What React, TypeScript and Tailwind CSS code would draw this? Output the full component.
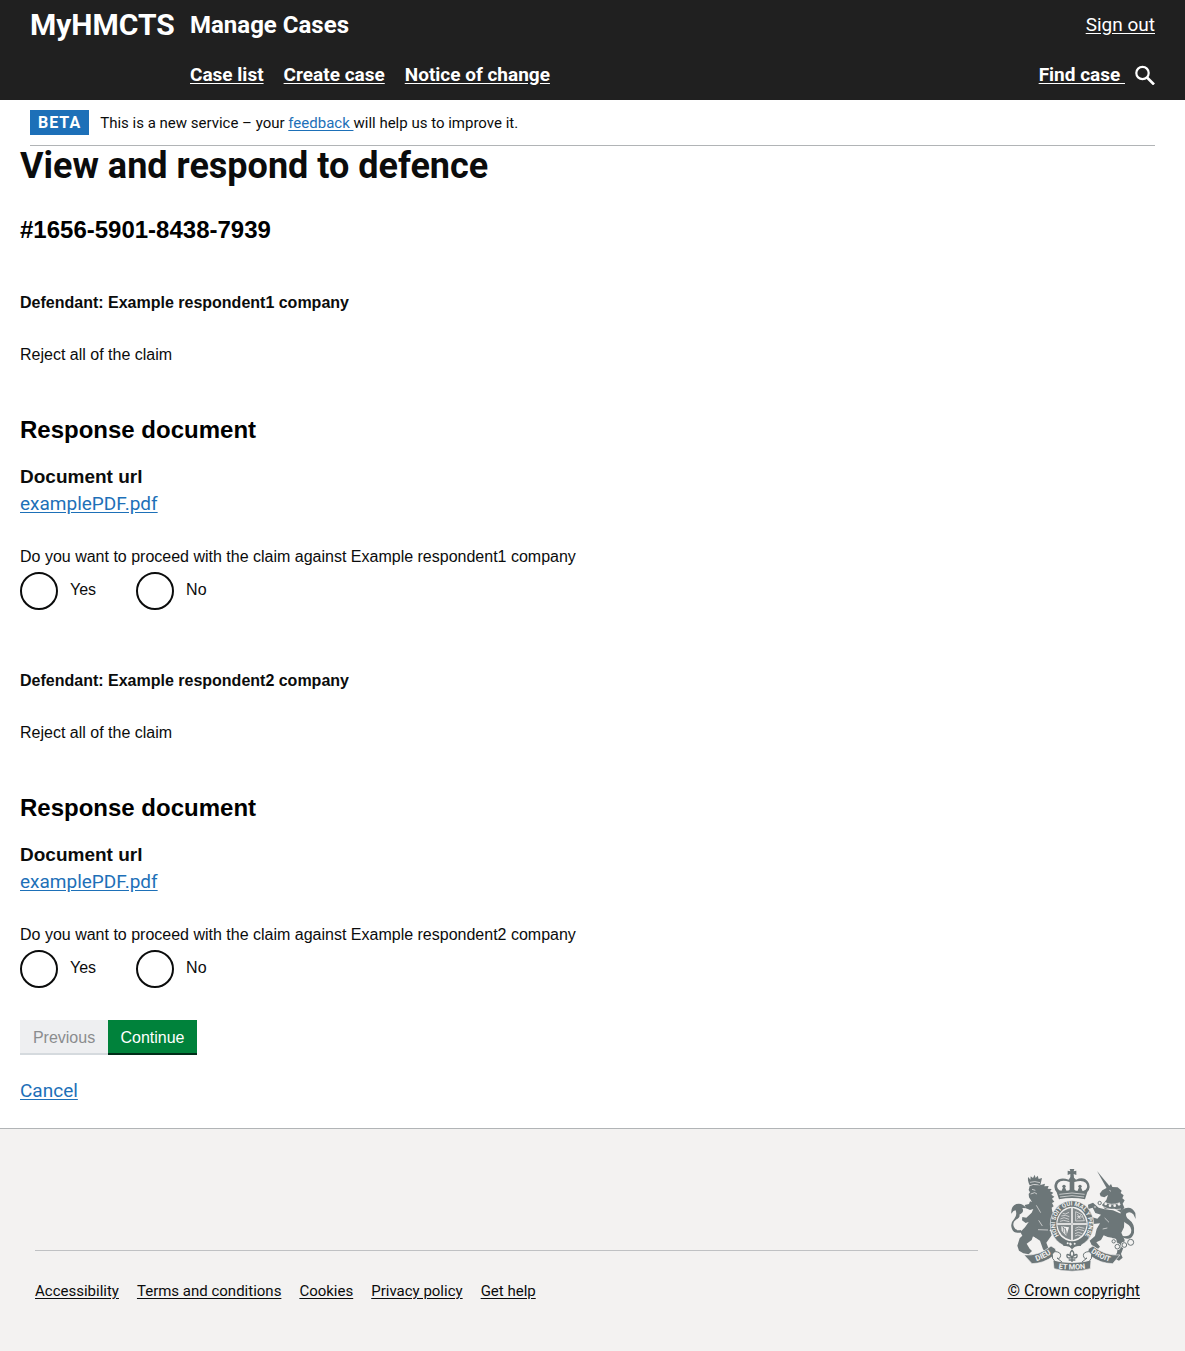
import React from "react";

const linkClass = "text-[#1d70b8] underline underline-offset-2";

function Crest() {
  return (
    <svg viewBox="21 27 375 306" className="h-[102px] w-[125px] overflow-visible" role="img" aria-label="Royal coat of arms">
      <defs>
        <path id="garter-motto" d="M169 231 A50 55 0 1 1 239 231" />
        <path id="ribbon-left" d="M88 306 Q120 298 150 275" />
        <path id="ribbon-mid" d="M155 324 Q204 333 253 324" />
        <path id="ribbon-right" d="M258 275 Q288 298 320 306" />
      </defs>
      <g fill="#6c7678" stroke="none">
        {/* lion */}
        <path d="M73 51 Q69 58 77 76 Q92 70 109 76 L114 54 L104 57 L101 47 L95 54 L92 44 L87 54 L80 49 L79 59 Z" />
        <path d="M77 78 L87 75 L107 76 L123 71 L121 79 L134 78 L131 86 L143 87 L138 94 L148 98 L142 104 L151 110 L144 116 L151 125 L144 129 L149 139 L143 143 L145 155 L154 168 L155 190 L144 192 L142 205 L134 216 L128 231 L117 237 L100 235 L87 229 L83 240 L68 251 L77 266 L84 273 L74 283 L58 280 L45 272 L40 257 L47 235 L55 227 L49 216 L63 202 L74 186 L65 189 L54 181 L55 171 L67 173 L83 158 L88 147 L78 150 L66 145 L62 135 L75 132 L78 124 L84 126 L80 119 L75 112 L74 102 L78 97 L74 90 Z" />
        <path d="M86 227 L109 214 L139 213 L143 226 L127 248 L134 266 L145 267 L151 281 L129 280 L117 268 L108 242 Z" />
        <path d="M22 161 Q20 138 37 132 Q55 127 68 145 L55 144 Q62 158 46 164 Q50 171 35 180 Q24 187 30 201 Q35 214 50 210 L55 216 Q31 224 24 207 Q17 190 31 176 Q40 166 35 151 Q28 151 22 161 Z" />
        {/* unicorn */}
        <path d="M279 33 L317 79 L309 86 Z" />
        <path d="M313 81 L321 72 L325 81 L341 82 L353 92 L350 99 L359 106 L355 115 L362 121 L356 131 L361 143 L350 157 L332 146 L303 148 L294 135 L307 120 L312 105 L301 112 L290 109 L287 101 L295 91 Z" />
        <path d="M302 148 L327 151 L351 161 L361 180 L360 202 L352 218 L362 240 L359 261 L351 282 L356 293 L345 302 L329 294 L339 278 L343 251 L324 233 L311 231 L299 226 L291 240 L277 247 L288 260 L282 266 L263 255 L257 242 L273 228 L278 207 L288 190 L268 192 L259 182 L263 171 L280 176 L291 164 L274 159 L266 143 L253 147 L252 134 L267 128 L284 143 Z" />
        <path d="M349 177 Q346 149 363 145 Q383 138 394 159 L395 177 L388 163 Q376 151 366 161 Q365 171 374 178 Q394 192 390 218 Q384 242 360 234 L347 226 Q374 234 381 218 Q385 199 366 190 Z" />
        {/* crown */}
        <path fillRule="evenodd" d="M197 27 L211 27 L209 34 L217 32 L217 45 L209 42 L210 53 L216 59 Q239 48 252 65 Q263 81 250 96 L243 118 Q204 110 165 118 L158 97 Q146 83 155 65 Q169 49 194 59 L199 51 L199 42 L191 45 L191 32 L199 34 Z M163 68 Q154 80 166 91 Q177 96 197 91 L197 66 Q173 57 163 68 Z M211 66 L211 91 Q233 98 245 89 Q254 79 245 68 Q235 59 211 66 Z" />
        <path d="M171 96 L180 76 L189 96 Z M219 96 L228 76 L237 96 Z M193 96 L204 78 L215 96 Z" />
        <circle cx="180" cy="79" r="5" />
        <circle cx="228" cy="79" r="5" />
        {/* garter */}
        <ellipse cx="204" cy="192" rx="65" ry="70" stroke="#f3f2f1" strokeWidth="2" />
      </g>
      <g fill="none" stroke="#f3f2f1" strokeWidth="2">
        <path d="M166 103 Q204 95 242 103 M168 111 Q204 103 240 111" />
        <path d="M78 67 Q92 62 108 68" />
        <path d="M84 88 L94 91 M80 102 L92 98 L99 102 M97 136 L110 158 M104 181 L115 198 M102 209 L132 210" />
        <path d="M300 125 Q320 139 348 128 M295 139 Q321 153 351 147" />
        <path d="M316 91 L321 94 M302 174 L315 187 M296 207 L310 204" />
      </g>
      <g fill="#f3f2f1">
        <circle cx="305" cy="132" r="4" />
        <circle cx="318" cy="137" r="4" />
        <circle cx="332" cy="137" r="4" />
        <circle cx="345" cy="133" r="4" />
        <ellipse cx="204" cy="192" rx="47" ry="52" />
      </g>
      {/* quartered shield */}
      <g fill="#6c7678" fillOpacity="0.85">
        <path d="M201 144 L201 189 L160 189 Q164 152 201 144 Z" />
        <path d="M207 144 Q243 152 248 189 L207 189 Z" />
        <path fillRule="evenodd" d="M160 195 L201 195 L201 240 Q165 231 160 195 Z M172 199 L195 202 L187 228 L173 213 Z" />
        <path d="M207 195 L248 195 Q243 231 207 240 Z" />
      </g>
      <path d="M204 143 L204 241 M159 192 L249 192" stroke="#6c7678" strokeWidth="2" strokeOpacity="0.5" />
      <path d="M175 200 Q190 208 187 227 M178 201 L178 217 M184 204 L184 223" fill="none" stroke="#6c7678" strokeWidth="2" />
      <g fill="none" stroke="#f3f2f1" strokeWidth="2">
        <path d="M176 160 L184 162 L195 157 M172 168 L184 166 L196 170 M169 177 L180 173 L195 178 M168 184 L179 181 L196 185" />
        <path d="M214 205 L224 201 L241 205 M213 212 L224 208 L240 212 M213 221 L223 217 L235 221 M213 228 L221 225 L230 227" />
        <path d="M215 155 L234 164 L241 182 L215 183 Z M220 162 L229 177 M231 164 L219 178 M219 170 L236 171" />
      </g>
      {/* lower garter */}
      <path d="M170 243 L204 258 L238 243 L230 258 L216 257 L204 268 L193 257 L179 258 Z" fill="#6c7678" />
      <g fill="#f3f2f1">
        <circle cx="191" cy="250" r="3" />
        <circle cx="212" cy="251" r="3" />
        <path d="M198 247 L204 252 L200 257 L195 252 Z" />
      </g>
      {/* ribbons */}
      <g fill="#6c7678" stroke="#f3f2f1" strokeWidth="2">
        <path d="M60 285 Q106 288 141 258 L154 266 Q160 279 147 289 Q120 310 84 311 Z" />
        <path d="M348 285 Q302 288 267 258 L254 266 Q248 279 261 289 Q288 310 326 311 Z" />
        <path d="M147 300 Q204 316 261 300 L259 326 Q204 341 150 326 Z" />
      </g>
      <g fill="#f3f2f1" stroke="#6c7678" strokeWidth="3">
        <path d="M152 302 Q143 298 145 284 Q148 272 161 276 Q174 280 168 293 Q164 298 159 294 L174 306" />
        <path d="M256 302 Q265 298 263 284 Q260 272 247 276 Q234 280 240 293 Q244 298 249 294 L234 306" />
      </g>
      <path d="M204 271 Q193 281 204 292 Q215 281 204 271 Z M204 291 Q187 277 189 289 Q190 297 204 292 Q218 297 219 289 Q221 277 204 291 M204 291 L204 306 M194 300 L214 300" fill="#f3f2f1" stroke="#6c7678" strokeWidth="4" />
      {/* chain */}
      <g fill="none" stroke="#f3f2f1" strokeWidth="8">
        <circle cx="329" cy="244" r="5" />
        <circle cx="340" cy="260" r="6" />
        <circle cx="361" cy="255" r="6" />
      </g>
      <g fill="#f3f2f1" stroke="#6c7678" strokeWidth="3">
        <circle cx="287" cy="129" r="5" />
        <circle cx="273" cy="141" r="4" />
        <circle cx="329" cy="244" r="5" />
        <circle cx="340" cy="260" r="7" />
        <circle cx="361" cy="255" r="7" />
        <circle cx="380" cy="247" r="9" />
      </g>
      <g fill="#f3f2f1" fontFamily="Roboto, sans-serif" fontWeight="700" textAnchor="middle">
        <text fontSize="18">
          <textPath href="#garter-motto" startOffset="50%">HONI SOIT QUI MAL Y PENSE</textPath>
        </text>
        <text fontSize="23">
          <textPath href="#ribbon-left" startOffset="50%">DIEU</textPath>
        </text>
        <text fontSize="22">
          <textPath href="#ribbon-mid" startOffset="50%">ET MON</textPath>
        </text>
        <text fontSize="22">
          <textPath href="#ribbon-right" startOffset="50%">DROIT</textPath>
        </text>
      </g>
    </svg>
  );
}

function Radio({ name, label }: { name: string; label: string }) {
  return (
    <label className="flex gap-3">
      <input
        type="radio"
        name={name}
        className="size-[38px] appearance-none rounded-full border-2 border-[#0b0c0c] bg-white checked:bg-[#0b0c0c] checked:shadow-[inset_0_0_0_7px_white]"
      />
      <span className="pt-2 leading-5">{label}</span>
    </label>
  );
}

function Defendant({ company, id }: { company: string; id: string }) {
  return (
    <section>
      <h3 className="leading-5 font-bold">Defendant: {company}</h3>
      <p className="mt-8 leading-5">Reject all of the claim</p>
      <h2 className="mt-[51px] text-2xl leading-7 font-bold text-black">Response document</h2>
      <h3 className="mt-[21px] text-[19px] leading-6 font-bold">Document url</h3>
      <a href="#document" className={`mt-[3px] block w-fit font-[Roboto,sans-serif] text-[19px] leading-6 ${linkClass}`}>
        examplePDF.pdf
      </a>
      <fieldset className="mt-[31px]">
        <legend className="leading-5">Do you want to proceed with the claim against {company}</legend>
        <div className="flex gap-10 pt-[5px]">
          <Radio name={id} label="Yes" />
          <Radio name={id} label="No" />
        </div>
      </fieldset>
    </section>
  );
}

const footerLinks = ["Accessibility", "Terms and conditions", "Cookies", "Privacy policy", "Get help"];

export default function App() {
  return (
    <div className="bg-white font-['Liberation_Sans',Arial,sans-serif] text-base text-[#0b0c0c]">
      <header className="bg-[#202020] px-[30px] font-[Roboto,sans-serif] text-white">
        <div className="flex h-[50px] items-center">
          <a href="#home" className="w-40 text-[30px] leading-10 font-bold">MyHMCTS</a>
          <a href="#cases" className="text-2xl font-bold">Manage Cases</a>
          <a href="#signout" className="ml-auto text-[19px] underline underline-offset-2">Sign out</a>
        </div>
        <nav className="flex h-[50px] items-center gap-5 pl-40 text-[19px] font-bold">
          <a href="#list" className="underline underline-offset-2">Case list</a>
          <a href="#create" className="underline underline-offset-2">Create case</a>
          <a href="#notice" className="underline underline-offset-2">Notice of change</a>
          <a href="#find" className="ml-auto flex items-center gap-2.5">
            <span className="whitespace-pre underline underline-offset-2">Find case </span>
            <svg viewBox="0 0 20 20" className="size-5" fill="none" stroke="currentColor" strokeWidth="2.2" aria-hidden="true">
              <circle cx="7.5" cy="8" r="6.2" />
              <path d="M12 12.5 L19 19.5" strokeWidth="2.6" />
            </svg>
          </a>
        </nav>
      </header>

      <div className="mx-[30px] flex items-center gap-[11px] border-b border-[#b1b4b6] py-2.5 font-[Roboto,sans-serif]">
        <strong className="bg-[#1d70b8] px-2 leading-[25px] font-bold tracking-[1px] text-white">BETA</strong>
        <p className="text-[15px] leading-5">
          This is a new service – your{" "}
          <a href="#feedback" className={`whitespace-pre ${linkClass}`}>feedback </a>
          will help us to improve it.
        </p>
      </div>

      <main className="px-5">
        <h1 className="font-[Roboto,sans-serif] text-4xl leading-10 font-bold">View and respond to defence</h1>
        <h2 className="mt-[30px] text-2xl leading-7 font-bold text-black">#1656-5901-8438-7939</h2>
        <form className="mt-[49px]" onSubmit={(e) => e.preventDefault()}>
          <div className="flex flex-col gap-[61px]">
            <Defendant company="Example respondent1 company" id="respondent1" />
            <Defendant company="Example respondent2 company" id="respondent2" />
          </div>
          <div className="mt-8 flex">
            <button type="button" disabled className="h-[35px] w-[88px] border-b-2 border-[#d5dade] bg-[#eeeff1] pt-0.5 text-[#8a8c8e]">
              Previous
            </button>
            <button type="submit" className="h-[35px] w-[89px] border-b-2 border-[#002d18] bg-[#00823b] pt-0.5 text-white">
              Continue
            </button>
          </div>
          <a href="#cancel" className={`mt-6 block w-fit font-[Roboto,sans-serif] text-[19px] leading-6 ${linkClass}`}>
            Cancel
          </a>
        </form>
      </main>

      <footer className="mt-[25px] flex items-end gap-[30px] border-t border-[#b1b4b6] bg-[#f3f2f1] pt-10 pr-[45px] pb-[50px] pl-[35px] font-[Roboto,sans-serif]">
        <ul className="flex flex-1 flex-wrap gap-x-[18px] border-t border-[#bfc1c3] pt-[30px] text-[15px] leading-5">
          {footerLinks.map((text) => (
            <li key={text}>
              <a href="#footer" className="underline underline-offset-2">{text}</a>
            </li>
          ))}
        </ul>
        <div className="flex flex-col items-center gap-2.5">
          <Crest />
          <a href="#copyright" className="leading-5 underline underline-offset-2">© Crown copyright</a>
        </div>
      </footer>
    </div>
  );
}
